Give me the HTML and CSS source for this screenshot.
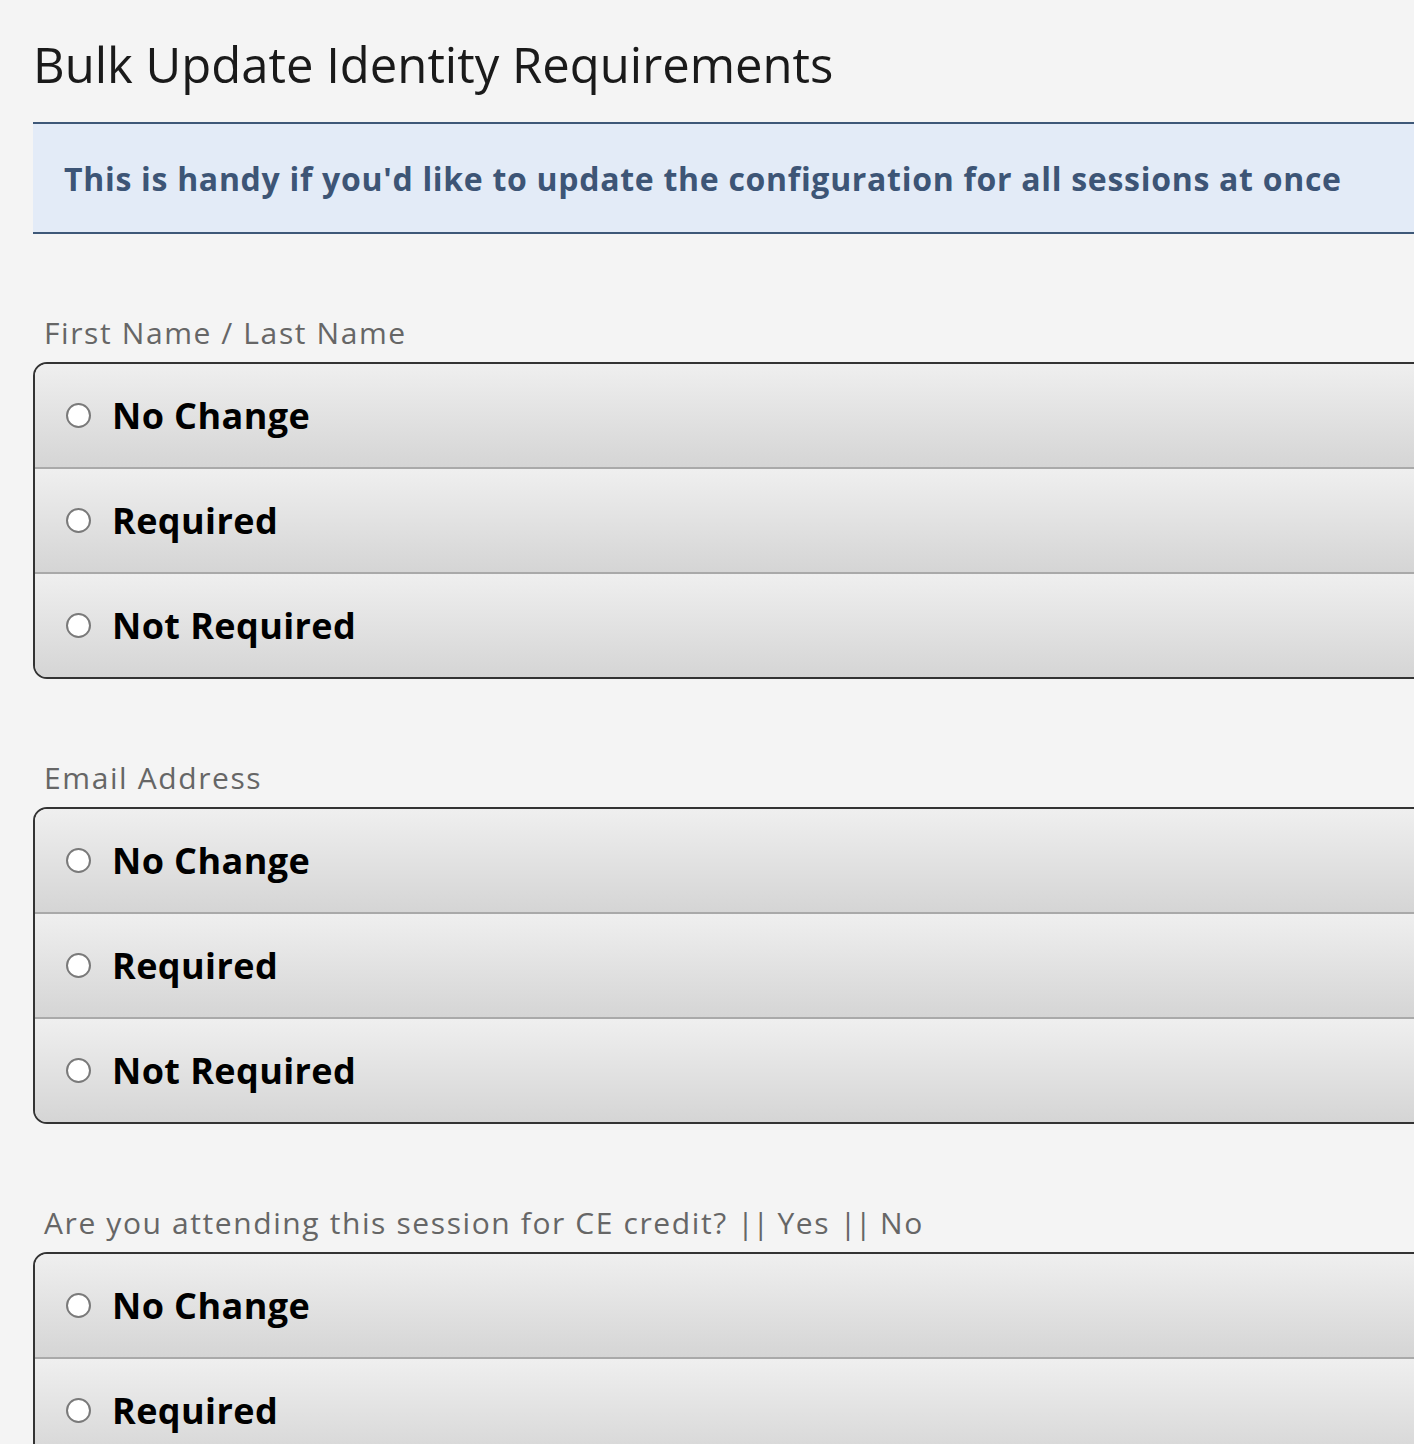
FILE: index.html
```html
<!DOCTYPE html>
<html lang="en">
<head>
<meta charset="utf-8">
<title>Bulk Update Identity Requirements</title>
<link rel="stylesheet" href="styles.css">
</head>
<body>
<div class="page">
  <h1 class="title">Bulk Update Identity Requirements</h1>
  <div class="info">This is handy if you'd like to update the configuration for all sessions at once</div>

  <div class="field">
    <div class="field-label">First Name / Last Name</div>
    <div class="group">
      <label class="opt"><span class="radio"></span><span class="opt-text">No Change</span></label>
      <label class="opt"><span class="radio"></span><span class="opt-text">Required</span></label>
      <label class="opt"><span class="radio"></span><span class="opt-text">Not Required</span></label>
    </div>
  </div>

  <div class="field">
    <div class="field-label">Email Address</div>
    <div class="group">
      <label class="opt"><span class="radio"></span><span class="opt-text">No Change</span></label>
      <label class="opt"><span class="radio"></span><span class="opt-text">Required</span></label>
      <label class="opt"><span class="radio"></span><span class="opt-text">Not Required</span></label>
    </div>
  </div>

  <div class="field">
    <div class="field-label">Are you attending this session for CE credit? <span class="pipes">||</span> Yes <span class="pipes">||</span> No</div>
    <div class="group">
      <label class="opt"><span class="radio"></span><span class="opt-text">No Change</span></label>
      <label class="opt"><span class="radio"></span><span class="opt-text">Required</span></label>
      <label class="opt"><span class="radio"></span><span class="opt-text">Not Required</span></label>
    </div>
  </div>
</div>
</body>
</html>
```

FILE: styles.css
```css
html {
  overflow: hidden;
  background: #f4f4f4;
}
body {
  margin: 0;
  background: #f4f4f4;
  font-family: "Open Sans", "DejaVu Sans", sans-serif;
  color: #111;
}
.page {
  width: 1460px;
  padding: 34px 0 0 33px;
}
.title {
  margin: 0;
  font-size: 49px;
  line-height: 60px;
  font-weight: 400;
  color: #1a1a1a;
}
.info {
  margin-top: 28px;
  height: 108px;
  display: flex;
  align-items: center;
  padding-left: 31px;
  background: #e3ebf7;
  border-top: 2px solid #3e5878;
  border-bottom: 2px solid #3e5878;
  color: #3d5576;
  font-weight: 700;
  font-size: 32px;
  letter-spacing: 0.7px;
}
.field {
  margin-top: 79px;
}
.field-label {
  padding-left: 11px;
  line-height: 40px;
  font-size: 30px;
  letter-spacing: 1.6px;
  color: #666;
  margin-bottom: 9px;
}
.pipes {
  letter-spacing: -1px;
}
.group {
  border: 2px solid #333;
  border-radius: 14px;
  overflow: hidden;
}
.opt {
  display: flex;
  align-items: center;
  height: 103px;
  padding-left: 31px;
  background: linear-gradient(#efefef, #d5d5d5);
}
.opt + .opt {
  border-top: 2px solid #a9a9a9;
}
.radio {
  width: 21px;
  height: 21px;
  border: 2px solid #7a7a7a;
  border-radius: 50%;
  background: #fff;
  flex: none;
}
.opt-text {
  margin-left: 21px;
  font-size: 36px;
  font-weight: 700;
  letter-spacing: 0.4px;
  color: #000;
}
```
